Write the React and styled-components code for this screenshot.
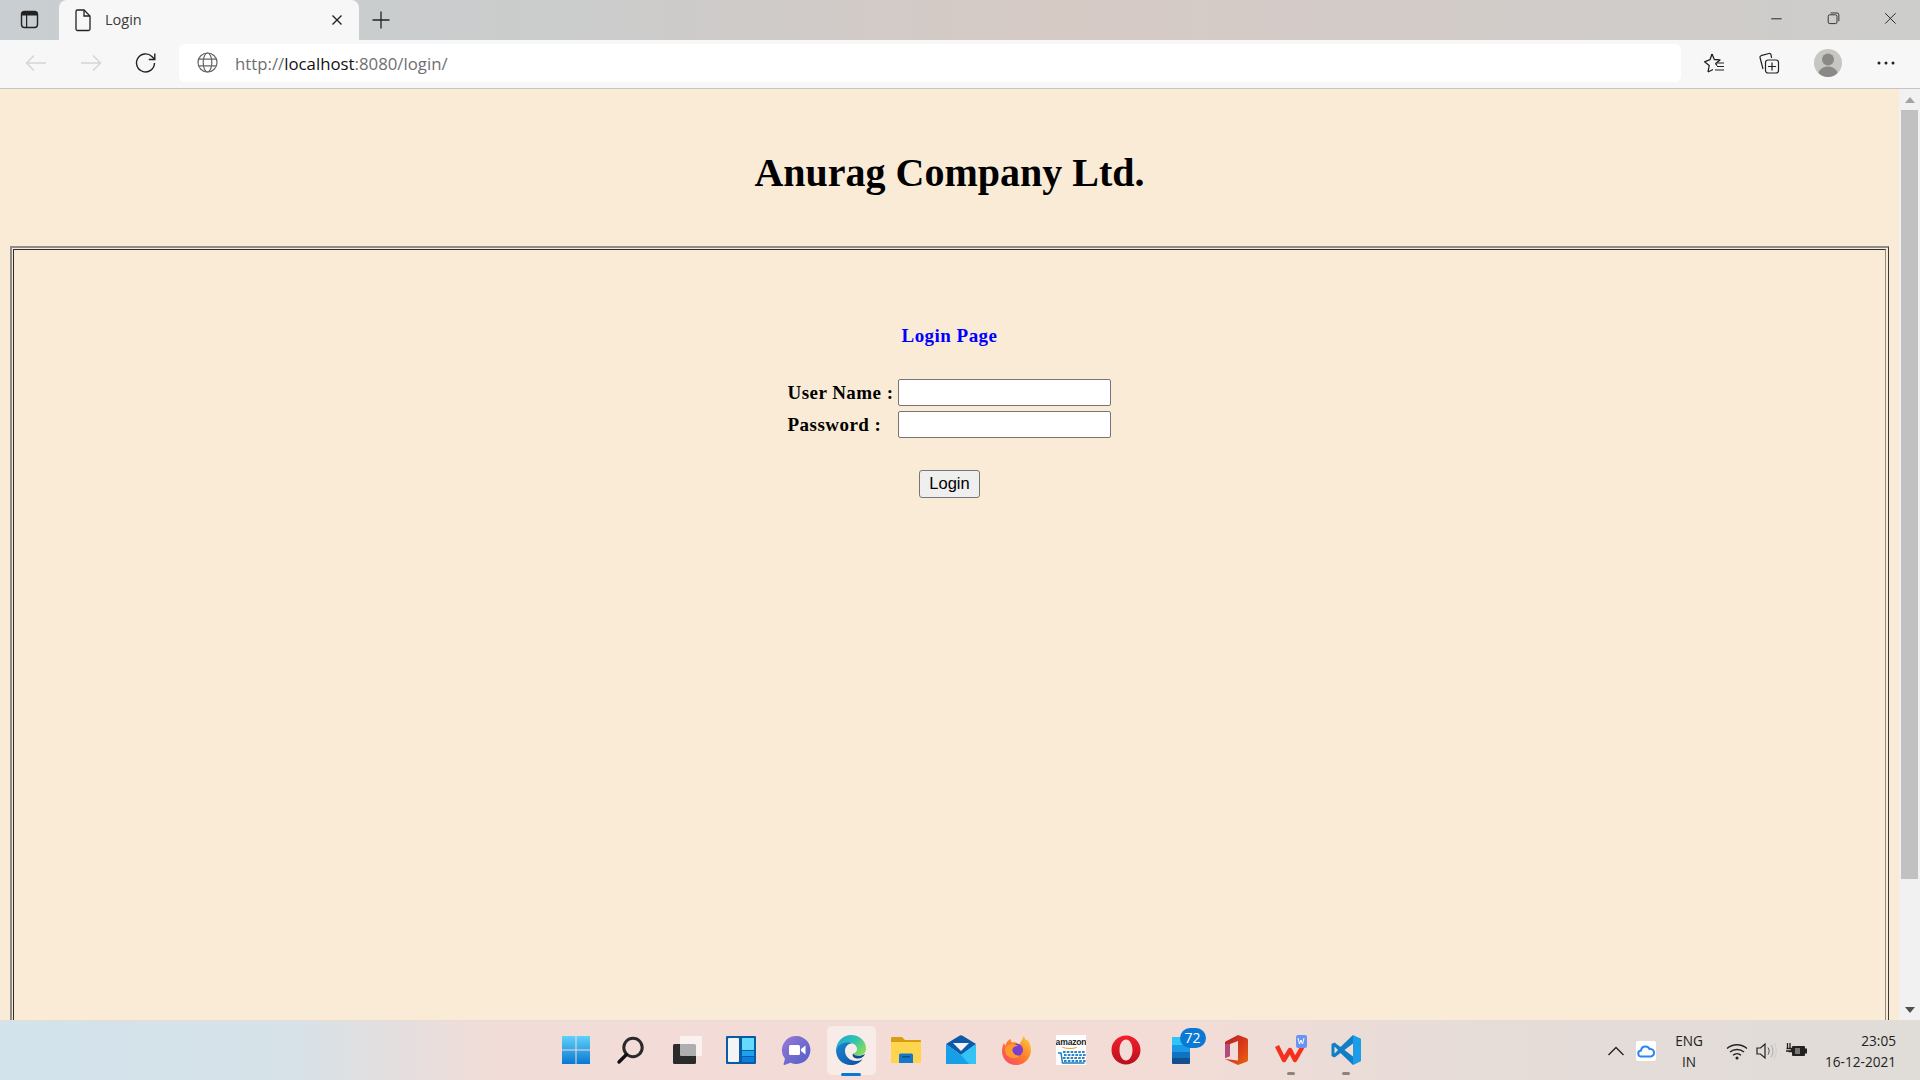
import React from 'react';
import styled, { createGlobalStyle } from 'styled-components';

const Global = createGlobalStyle`
  html, body { margin: 0; padding: 0; height: 100%; overflow: hidden; }
  #root { height: 100%; }
  * { box-sizing: border-box; }
`;
const UI = `"Open Sans", "Noto Sans", sans-serif`;

const Screen = styled.div`width:1920px;height:1080px;display:flex;flex-direction:column;overflow:hidden;font-family:${UI};`;
const TabStrip = styled.div`height:40px;flex:none;display:flex;align-items:flex-end;background:linear-gradient(90deg,#c8ced1 0%,#cbcccc 30%,#d6cac5 55%,#d3cbc8 70%,#cdcdcb 100%);`;
const SideButton = styled.div`width:59px;height:40px;display:flex;align-items:center;justify-content:center;padding-left:1px;`;
const Tab = styled.div`width:300px;height:40px;background:#f7f7f7;border-radius:8px 8px 0 0;display:flex;align-items:center;padding:0 12px 0 12px;color:#3b3b3b;font-size:14.5px;`;
const TabTitle = styled.span`flex:1;margin-left:10px;margin-top:-2px;`;
const NewTab = styled.div`width:44px;height:40px;display:flex;align-items:center;justify-content:center;`;
const Spacer = styled.div`flex:1;`;
const WinButton = styled.div`width:57px;height:40px;display:flex;align-items:center;justify-content:center;`;
const Toolbar = styled.div`height:49px;flex:none;background:#f7f7f7;border-bottom:1px solid #c4c4c4;display:flex;align-items:center;padding:0 0 3px 8px;`;
const NavButton = styled.div`width:55px;height:40px;display:flex;align-items:center;justify-content:center;`;
const AddressBar = styled.div`width:1502px;height:38px;margin-left:6px;background:#fff;border-radius:6px;display:flex;align-items:center;padding-left:18px;font-size:16.8px;color:#6f6f6f;`;
const Url = styled.span`margin:1px 0 0 17px;`;
const Host = styled.span`color:#111;`;
const ToolIcons = styled.div`flex:1;display:flex;align-items:center;padding-left:5.5px;`;
const ToolIcon = styled.div`width:${p => p.$w || 55}px;height:40px;display:flex;align-items:center;justify-content:center;`;

const Viewport = styled.div`flex:1;min-height:0;display:flex;background:#faebd7;`;
const Page = styled.main`flex:1;min-width:0;overflow:hidden;padding:0 10px;font-family:"Liberation Serif",serif;color:#000;`;
const Heading = styled.h1`margin:0;height:157px;padding-top:60px;text-align:center;font-size:40px;line-height:48px;font-weight:700;`;
const Frame = styled.div`height:900px;border-style:solid;border-width:2px 1px 1px 2px;border-color:#8f8c88 #3a3a3a #3a3a3a #8f8c88;padding:1px 2px 1px 1px;`;
const FrameInner = styled.div`height:100%;border:1px solid;border-color:#2c2c2c #8f8c88 #8f8c88 #2c2c2c;padding-top:75px;display:flex;flex-direction:column;align-items:center;`;
const SubHeading = styled.h3`margin:0;font-size:19px;line-height:22px;color:#00f;font-weight:700;letter-spacing:.46px;`;
const Fields = styled.div`margin-top:32px;margin-left:-2px;display:grid;grid-template-columns:111px 213px;row-gap:5px;align-items:center;`;
const Label = styled.label`font-size:19px;font-weight:700;letter-spacing:.46px;white-space:nowrap;padding-left:1px;`;
const Input = styled.input`width:213px;height:27px;border:1px solid #767676;border-radius:2px;background:#fff;padding:1px 2px;`;
const LoginButton = styled.button`margin-top:32px;width:61px;height:28px;padding:0 0 2px;border:1px solid #767676;border-radius:3px;background:#efefef;font-family:"Liberation Sans",Arial,sans-serif;font-size:16.5px;color:#000;`;

const Scrollbar = styled.div`width:21px;flex:none;background:#f1f1f1;display:flex;flex-direction:column;align-items:center;padding:0 2px;`;
const ScrollEnd = styled.div`height:21px;flex:none;width:100%;display:flex;align-items:center;justify-content:center;`;
const Thumb = styled.div`width:17px;height:769px;flex:none;background:#c1c1c1;`;
const ScrollGap = styled.div`flex:1;`;

const Taskbar = styled.footer`height:60px;flex:none;border-top:1px solid #e8dcd5;display:grid;grid-template-columns:1fr auto 1fr;background:linear-gradient(90deg,#d2e3ec 0%,#d6e2e8 15%,#f2dcd7 26%,#f4dcd6 60%,#e6dcd8 76%,#e0dcd8 100%);`;
const TaskIcons = styled.div`grid-column:2;display:flex;align-items:center;padding:0 0 2px 2px;`;
const TaskItem = styled.div`position:relative;width:55px;height:57px;display:flex;align-items:center;justify-content:center;`;
const ActiveBg = styled.div`position:absolute;left:3px;top:5px;width:49px;height:49px;border-radius:5px;background:rgba(255,255,255,.45);`;
const Running = styled.div`position:absolute;left:50%;bottom:${p => p.$active ? 2 : 3}px;transform:translateX(-50%);width:${p => p.$active ? 20 : 8}px;height:3px;border-radius:2px;background:${p => p.$active ? '#0a78d4' : '#8a8380'};`;
const Badge = styled.div`position:absolute;left:26px;top:7px;width:26px;height:20px;border-radius:10px;background:#0a78d4;color:#fff;font-size:14px;line-height:20px;text-align:center;`;
const Tray = styled.div`display:flex;align-items:center;justify-content:flex-end;padding-right:24px;color:#222;font-size:13.6px;line-height:21px;`;
const TrayIcon = styled.div`width:${p => p.$w}px;display:flex;justify-content:center;`;
const Lang = styled.div`width:50px;margin:0 11px 0 0;text-align:center;`;
const Clock = styled.div`margin-left:16px;text-align:right;`;
const IconSvg = styled.svg`display:block;flex:none;position:relative;`;

const Ic = ({ s = 20, vb = '0 0 20 20', children }) => <IconSvg width={s} height={s} viewBox={vb} fill="none">{children}</IconSvg>;

const Win = () => <Ic s={30} vb="0 0 30 30"><defs><linearGradient id="w" x1="0" y1="0" x2="0" y2="1"><stop stopColor="#5fd2f9" /><stop offset="1" stopColor="#0a78d4" /></linearGradient></defs><path fill="url(#w)" d="M1 1h13.5v13.5H1zM15.5 1H29v13.5H15.5zM1 15.5h13.5V29H1zM15.5 15.5H29V29H15.5z" /></Ic>;
const Search = () => <Ic s={30} vb="0 0 30 30"><circle cx="17" cy="12.5" r="9.2" stroke="#2a2a2a" strokeWidth="3" /><path d="M10.5 19.5 3 27" stroke="#111" strokeWidth="3.4" strokeLinecap="round" /></Ic>;
const TaskView = () => <Ic s={32} vb="0 0 32 32"><rect x="3" y="10" width="23" height="20" rx="1.5" fill="#2b2b2b" /><rect x="10" y="2" width="22" height="20" rx="1" fill="#fff" fillOpacity=".62" /></Ic>;
const Widgets = () => <Ic s={32} vb="0 0 32 32"><rect x="1" y="2" width="30" height="28" rx="1" fill="#0c59a4" /><rect x="3" y="4" width="11" height="24" rx="1" fill="#f2f4f6" /><rect x="17" y="4" width="12" height="12" fill="#63dcfb" /><rect x="17" y="17" width="12" height="5" fill="#1ea1f1" /><rect x="17" y="23" width="12" height="5" fill="#0c7fdc" /></Ic>;
const Chat = () => <Ic s={32} vb="0 0 32 32"><defs><linearGradient id="c" x1="0" y1="0" x2="1" y2="1"><stop stopColor="#9a78d8" /><stop offset="1" stopColor="#4e5ec8" /></linearGradient></defs><path fill="url(#c)" d="M16.5 2a14 14 0 1 1-6 26.7L4.5 31c-.7.2-1-.3-.9-.9l1.4-5.4A14 14 0 0 1 16.5 2Z" /><rect x="9" y="11" width="11" height="10" rx="1.5" fill="#fff" /><path fill="#fff" d="m21 15 4.5-3.5v9L21 17z" /></Ic>;
const Edge = () => <Ic s={32} vb="0 0 32 32"><defs><linearGradient id="e1" x1="0" y1="0" x2="1" y2=".6"><stop stopColor="#1ba6d8" /><stop offset=".6" stopColor="#34c4b0" /><stop offset="1" stopColor="#7fdc5c" /></linearGradient><linearGradient id="e2" x1="0" y1="0" x2="1" y2="1"><stop stopColor="#1b86d6" /><stop offset="1" stopColor="#0f4f9e" /></linearGradient></defs><path fill="url(#e1)" d="M16 1c8.5 0 15 6 15 13.5 0 4.7-3.7 7-7.5 7-2.5 0-5-.8-5.5-2 2.500-.5 4-2 4-4.500C22 11 18 9 14 9 8 9 3 12 1 16 1.500 7.500 8 1 16 1Z" /><path fill="url(#e2)" d="M1 16c1.500-5 6.500-7.500 12-7.500 1.500 0 2.500.3 3.500 1-4 .5-6.500 3.500-6.500 7.500 0 6 5.500 10 11 10 3 0 5-.7 6.500-2C25 29 20.500 31 16 31 7 31 1 24.500 1 16Z" /><path fill="#0e4a8e" d="M18 19.500c1 1.500 3 2.200 5.500 2.200 2 0 4.500-.5 6.500-2-1 3-3.500 4.800-7 4.800-3.500 0-6.500-2-5-5Z" /></Ic>;
const Folder = () => <Ic s={32} vb="0 0 32 32"><path fill="#d99e10" d="M1 4a1 1 0 0 1 1-1h10l3 3h15a1 1 0 0 1 1 1v5H1z" /><path fill="#ffd54f" d="M1 8h30v20a1 1 0 0 1-1 1H2a1 1 0 0 1-1-1z" /><path fill="#1578c8" d="M9 21a1.500 1.500 0 0 1 1.500-1.500h11A1.500 1.500 0 0 1 23 21v8H9z" /><rect x="12" y="22" width="8" height="1.500" fill="#0c4f8e" /></Ic>;
const Mail = () => <Ic s={32} vb="0 0 32 32"><path fill="#0c5aa8" d="M1 10 14 2a3.500 3.500 0 0 1 4 0l13 8L16 21z" /><path fill="#f4f4f4" d="M8 9h16L16 17z" /><path fill="#149fe6" d="M1 10 16 21 31 10v20H1z" /><path fill="#33c4f5" d="M31 10v20H24L16 21z" /></Ic>;
const Firefox = () => <Ic s={32} vb="0 0 32 32"><defs><linearGradient id="f" x1="0" y1="1" x2="1" y2="0"><stop stopColor="#f7407a" /><stop offset=".5" stopColor="#ff7a2a" /><stop offset="1" stopColor="#ffd23a" /></linearGradient></defs><path fill="url(#f)" d="M29.500 9c2 5 2 10-.5 14.500C26 28.500 21.500 31 16 31 8 31 2 25 2 17c0-3 .8-6 2-8 .3 1 .7 2 1.500 2.700C6.500 8 9 5 11 5c-.5 1.500 0 2.500 1 3.500 3-.5 5.500.5 7 2 2-2 3-5 5-9 .5 3 1.500 4.500 2.500 4.500 1 0 2.300 1 3 3Z" /><circle cx="16.500" cy="16" r="6.500" fill="#7b3fd0" /><path fill="#ff9a2e" d="M5 14c3-5 10-5 13-2-3 0-5 1-5.500 3-.5 4 3 7 7 6.500-2 4-12 4-14-3-.5-1.500-.5-3-.5-4.500Z" /></Ic>;
const AmazonBox = styled.div`width:30px;height:30px;background:#fff;overflow:hidden;display:flex;flex-direction:column;align-items:center;font-family:"Liberation Sans",sans-serif;`;
const AmazonWord = styled.span`font-size:8.6px;line-height:10px;margin-top:2px;font-weight:700;color:#222;letter-spacing:-.2px;`;
const Amazon = () => <AmazonBox><AmazonWord>amazon</AmazonWord><Ic s={30} vb="0 0 30 30"><path d="M6 0c4 2 12 2 15 0" stroke="#f29a1f" strokeWidth="1" /><path d="M2 6h3l1.500 10h22" stroke="#1b7fbd" strokeWidth="1.500" /><g fill="#2a86c4">{[0, 1, 2, 3].map(r => [0, 1, 2, 3, 4, 5].map(c => <rect key={r + '-' + c} x={7 + c * 3.8 + (r % 2)} y={4 + r * 3} width="2.600" height="2" />))}</g></Ic></AmazonBox>;
const Opera = () => <Ic s={32} vb="0 0 32 32"><defs><linearGradient id="o" x1="0" y1="0" x2="0" y2="1"><stop stopColor="#f4202c" /><stop offset="1" stopColor="#b80f1c" /></linearGradient></defs><path fill="url(#o)" fillRule="evenodd" d="M16 1.500c8 0 14.500 6.500 14.500 14.500S24 30.500 16 30.500 1.500 24 1.500 16 8 1.500 16 1.500ZM16 5.500c-3.500 0-6.500 4.500-6.500 10.500s3 10.500 6.500 10.500 6.500-4.500 6.500-10.500-3-10.500-6.500-10.500Z" /></Ic>;
const Store = () => <Ic s={32} vb="0 0 32 32"><rect x="7" y="3" width="18" height="8" fill="#30c5f4" /><rect x="7" y="11" width="18" height="7" fill="#1a9ae6" /><rect x="7" y="18" width="18" height="6" fill="#0f73c2" /><path fill="#134f8f" d="M7 24h18v5a1 1 0 0 1-1 1H8a1 1 0 0 1-1-1z" /></Ic>;
const Office = () => <Ic s={32} vb="0 0 32 32"><defs><linearGradient id="of" x1="0" y1="0" x2="1" y2="1"><stop stopColor="#b4201e" /><stop offset=".55" stopColor="#d83b1c" /><stop offset="1" stopColor="#e8660c" /></linearGradient></defs><path fill="url(#of)" fillRule="evenodd" d="M18 1 26 4c1 .4 2 1 2 2v20c0 1-1 1.600-2 2l-8 3-13-6 13 1.500V7l-8 3v12l-5 2V9c0-1 .6-1.600 1.500-2z" /><path fill="#b4497e" d="M5 10h5v12l-5 2z" /></Ic>;
const Wps = () => <Ic s={34} vb="0 0 34 34"><path d="M3 13l7 14 6-10 5 10 8-14" stroke="#f5301c" strokeWidth="4.500" strokeLinejoin="round" /><rect x="22" y="2" width="11" height="13" rx="2" fill="#6a94f2" /><path d="M24 5l1.500 6 1.500-4 1.500 4 1.500-6" stroke="#fff" strokeWidth="1" /></Ic>;
const VsCode = () => <Ic s={32} vb="0 0 32 32"><path fill="#0f7fc6" d="M23 1 10.500 13 4.500 8.500 1.500 10v12l3 1.500 6-4.500L23 31z" /><path fill="#1c9de8" d="m23 1 7.500 3.500a1 1 0 0 1 .5 1v21a1 1 0 0 1-.5 1L23 31z" /><path fill="#f4dcd6" d="M23 9.500 14.500 16l8.500 6.500zM4.500 12.500v7l3.500-3.500z" /></Ic>;

export default function App() {
  return (
    <Screen>
      <Global />
      <TabStrip>
        <SideButton><Ic s={20}><rect x="1.500" y="1.500" width="16" height="16" rx="3" stroke="#222" strokeWidth="1.400" /><path fill="#222" d="M2 2h15v3.500H2zM6 5h1.200v12H6z" /></Ic></SideButton>
        <Tab>
          <Ic s={24} vb="0 0 24 24"><path d="M5 3.500A1.500 1.500 0 0 1 6.500 2H13l6 6v13a1.500 1.500 0 0 1-1.500 1.500h-11A1.500 1.500 0 0 1 5 21z" stroke="#222" strokeWidth="1.300" /><path d="M13 2v6h6" stroke="#222" strokeWidth="1.300" /></Ic>
          <TabTitle>Login</TabTitle>
          <Ic s={20}><path d="m5.500 5.500 9 9m0-9-9 9" stroke="#222" strokeWidth="1.400" /></Ic>
        </Tab>
        <NewTab><Ic s={20}><path d="M10 1.500v17M1.500 10h17" stroke="#222" strokeWidth="1.300" /></Ic></NewTab>
        <Spacer />
        <WinButton><Ic s={16}><path d="M1.500 8.500h13" stroke="#222" strokeWidth="1.200" /></Ic></WinButton>
        <WinButton><Ic s={16}><rect x="1.500" y="3.500" width="11" height="11" rx="2" stroke="#222" strokeWidth="1.100" /><path d="M4.500 1.200h8a2.300 2.300 0 0 1 2.300 2.300v8" stroke="#222" strokeWidth="1.100" /></Ic></WinButton>
        <WinButton><Ic s={16}><path d="m1.500 1.500 13 13m0-13-13 13" stroke="#222" strokeWidth="1.200" /></Ic></WinButton>
      </TabStrip>
      <Toolbar>
        <NavButton><Ic s={24} vb="0 0 24 24"><path d="M22 12H2.500M10 4.500 2.500 12l7.500 7.500" stroke="#d5d5d5" strokeWidth="1.400" /></Ic></NavButton>
        <NavButton><Ic s={24} vb="0 0 24 24"><path d="M2 12h19.500M14 4.500l7.500 7.500-7.500 7.500" stroke="#d5d5d5" strokeWidth="1.400" /></Ic></NavButton>
        <NavButton><Ic s={22} vb="0 0 22 22"><path d="M19.500 11a9 9 0 1 1-2.600-6.400L19.500 7.200" stroke="#222" strokeWidth="1.400" /><path d="M19.800 1.500v6h-6" stroke="#222" strokeWidth="1.400" /></Ic></NavButton>
        <AddressBar>
          <Ic s={21} vb="0 0 21 21"><g stroke="#666" strokeWidth="1.200"><circle cx="10.500" cy="10.500" r="9.500" /><ellipse cx="10.500" cy="10.500" rx="4.300" ry="9.500" /><path d="M1.500 7.200h18M1.500 13.800h18" /></g></Ic>
          <Url>http://<Host>localhost</Host>:8080/login/</Url>
        </AddressBar>
        <ToolIcons>
          <ToolIcon><Ic s={22} vb="0 0 22 22"><path d="M9 2 11.300 7.500l5.700.4-4.300 3.700 1.300 2M5 20l1.200-6.500L1.500 9.800 7 7.700 9 2M5 20l5-2.500" stroke="#222" strokeWidth="1.300" strokeLinejoin="round" /><path d="M14 11h7M14 14.500h7M12 18h9" stroke="#222" strokeWidth="1.200" /></Ic></ToolIcon>
          <ToolIcon><Ic s={22} vb="0 0 22 22"><path d="M5 17 2 5.500A1.500 1.500 0 0 1 3 3.700L11 1.500c1-.2 1.800.2 2 1.200L13.500 6" stroke="#222" strokeWidth="1.200" /><rect x="7.500" y="8" width="13" height="13" rx="2.500" stroke="#222" strokeWidth="1.200" /><path d="M14 10.500v8M10 14.500h8" stroke="#222" strokeWidth="1.200" /></Ic></ToolIcon>
          <ToolIcon $w={62}><Ic s={28} vb="0 0 28 28"><circle cx="14" cy="14" r="14" fill="#c8c6c3" /><circle cx="14" cy="10.500" r="6" fill="#8b8986" /><path fill="#8b8986" d="M4.500 24c1-4 5-6.500 9.500-6.500s8.500 2.500 9.500 6.500c-2.500 2.500-6 4-9.500 4s-7-1.500-9.500-4Z" /></Ic></ToolIcon>
          <ToolIcon $w={54}><Ic s={18} vb="0 0 18 18"><g fill="#222"><circle cx="2" cy="9" r="1.500" /><circle cx="9" cy="9" r="1.500" /><circle cx="16" cy="9" r="1.500" /></g></Ic></ToolIcon>
        </ToolIcons>
      </Toolbar>
      <Viewport>
        <Page>
          <Heading>Anurag Company Ltd.</Heading>
          <Frame>
            <FrameInner>
              <SubHeading>Login Page</SubHeading>
              <Fields>
                <Label>User Name :</Label><Input type="text" />
                <Label>Password :</Label><Input type="password" />
              </Fields>
              <LoginButton>Login</LoginButton>
            </FrameInner>
          </Frame>
        </Page>
        <Scrollbar>
          <ScrollEnd><Ic s={10} vb="0 0 10 6"><path fill="#a3a3a3" d="M5 0l5 6H0z" /></Ic></ScrollEnd>
          <Thumb />
          <ScrollGap />
          <ScrollEnd><Ic s={10} vb="0 0 10 6"><path fill="#505050" d="M5 6 0 0h10z" /></Ic></ScrollEnd>
        </Scrollbar>
      </Viewport>
      <Taskbar>
        <TaskIcons>
          <TaskItem><Win /></TaskItem>
          <TaskItem><Search /></TaskItem>
          <TaskItem><TaskView /></TaskItem>
          <TaskItem><Widgets /></TaskItem>
          <TaskItem><Chat /></TaskItem>
          <TaskItem><ActiveBg /><Edge /><Running $active /></TaskItem>
          <TaskItem><Folder /></TaskItem>
          <TaskItem><Mail /></TaskItem>
          <TaskItem><Firefox /></TaskItem>
          <TaskItem><Amazon /></TaskItem>
          <TaskItem><Opera /></TaskItem>
          <TaskItem><Store /><Badge>72</Badge></TaskItem>
          <TaskItem><Office /></TaskItem>
          <TaskItem><Wps /><Running /></TaskItem>
          <TaskItem><VsCode /><Running /></TaskItem>
        </TaskIcons>
        <Tray>
          <TrayIcon $w={24}><Ic s={18} vb="0 0 18 18"><path d="m1.500 13 7.500-7.500 7.500 7.500" stroke="#222" strokeWidth="1.300" /></Ic></TrayIcon>
          <TrayIcon $w={36}><Ic s={20}><rect width="20" height="20" rx="2" fill="#fff" /><path d="M5.500 15.500a3 3 0 0 1-.5-6 4.500 4.500 0 0 1 8.500-1.500 3.800 3.800 0 0 1 1.500 7.500z" stroke="#2f86f0" strokeWidth="2" /></Ic></TrayIcon>
          <Lang>ENG<br />IN</Lang>
          <TrayIcon $w={24}><Ic s={22} vb="0 0 22 22"><path d="M1 8.500c5.500-5 14.500-5 20 0M4 12c3.800-3.400 10.200-3.400 14 0M7 15.200c2.300-2 5.700-2 8 0" stroke="#222" strokeWidth="1.400" /><circle cx="11" cy="18" r="1.500" fill="#222" /></Ic></TrayIcon>
          <TrayIcon $w={34}><Ic s={22} vb="0 0 22 22"><path d="M2 8h3.500L10 4v14l-4.500-4H2z" stroke="#222" strokeWidth="1.200" /><path d="M13 7.500c1.500 2 1.500 5 0 7" stroke="#555" /><path d="M16 5c2.500 3.500 2.500 8.500 0 12" stroke="#aaa" /><path d="M19 3c3 4.500 3 11.500 0 16" stroke="#ccc" /></Ic></TrayIcon>
          <TrayIcon $w={26}><Ic s={22} vb="0 0 22 22"><path fill="#222" d="M8 6h11a1 1 0 0 1 1 1v1.500h2v5h-2V15a1 1 0 0 1-1 1H8a1 1 0 0 1-1-1V7a1 1 0 0 1 1-1Z" /><path fill="#7a7672" d="M10 8h5v6h-5z" /><path d="M1 11h5M2.500 3v6M5 3v6M1.500 8.500h5v3H3.500" stroke="#222" strokeWidth="1.300" /></Ic></TrayIcon>
          <Clock>23:05<br />16-12-2021</Clock>
        </Tray>
      </Taskbar>
    </Screen>
  );
}
